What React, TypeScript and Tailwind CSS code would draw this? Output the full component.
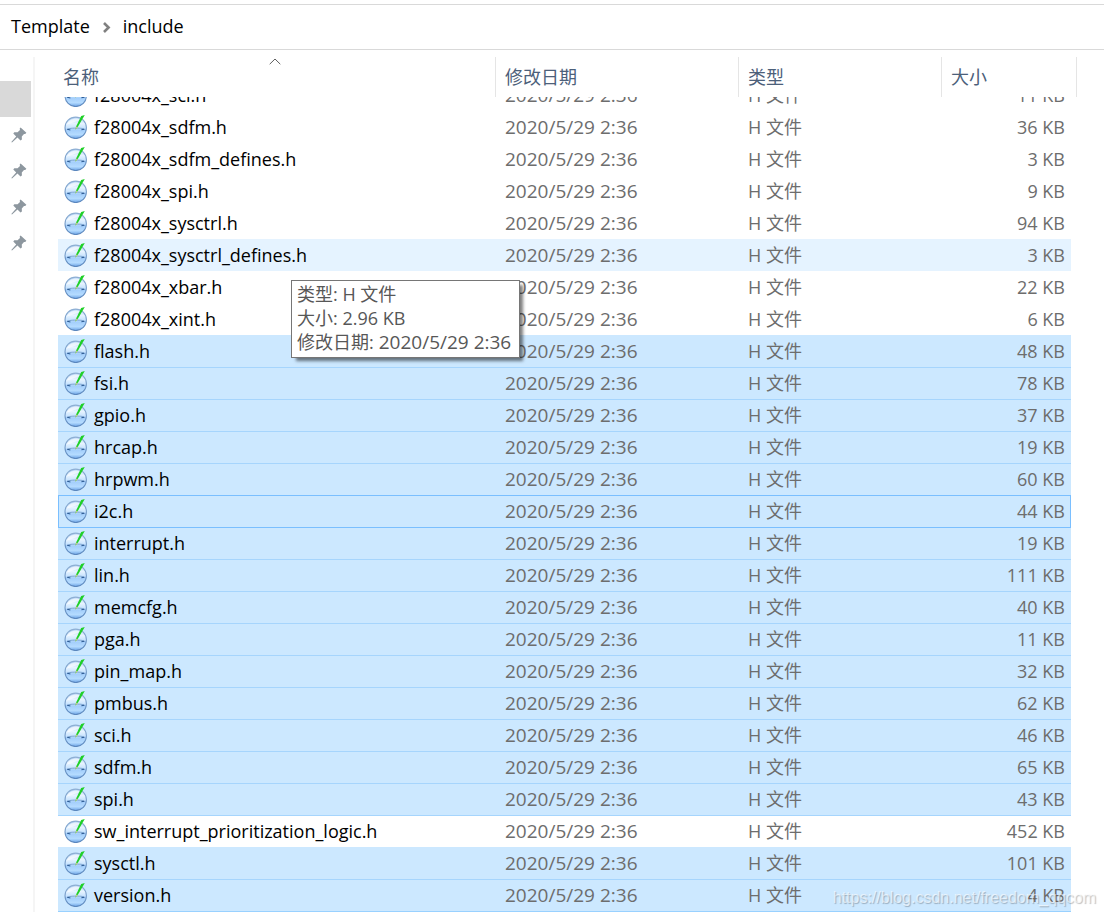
import clsx from "clsx";

type FileRow = {
  name: string;
  size: string;
  state?: "hover" | "selected" | "focused";
};

const MODIFIED = "2020/5/29 2:36";
const TYPE = "H 文件";

const files: FileRow[] = [
  { name: "f28004x_sci.h", size: "11 KB" },
  { name: "f28004x_sdfm.h", size: "36 KB" },
  { name: "f28004x_sdfm_defines.h", size: "3 KB" },
  { name: "f28004x_spi.h", size: "9 KB" },
  { name: "f28004x_sysctrl.h", size: "94 KB" },
  { name: "f28004x_sysctrl_defines.h", size: "3 KB", state: "hover" },
  { name: "f28004x_xbar.h", size: "22 KB" },
  { name: "f28004x_xint.h", size: "6 KB" },
  { name: "flash.h", size: "48 KB", state: "selected" },
  { name: "fsi.h", size: "78 KB", state: "selected" },
  { name: "gpio.h", size: "37 KB", state: "selected" },
  { name: "hrcap.h", size: "19 KB", state: "selected" },
  { name: "hrpwm.h", size: "60 KB", state: "selected" },
  { name: "i2c.h", size: "44 KB", state: "focused" },
  { name: "interrupt.h", size: "19 KB", state: "selected" },
  { name: "lin.h", size: "111 KB", state: "selected" },
  { name: "memcfg.h", size: "40 KB", state: "selected" },
  { name: "pga.h", size: "11 KB", state: "selected" },
  { name: "pin_map.h", size: "32 KB", state: "selected" },
  { name: "pmbus.h", size: "62 KB", state: "selected" },
  { name: "sci.h", size: "46 KB", state: "selected" },
  { name: "sdfm.h", size: "65 KB", state: "selected" },
  { name: "spi.h", size: "43 KB", state: "selected" },
  { name: "sw_interrupt_prioritization_logic.h", size: "452 KB" },
  { name: "sysctl.h", size: "101 KB", state: "selected" },
  { name: "version.h", size: "4 KB", state: "selected" },
];

const isSelected = (file?: FileRow) =>
  file?.state === "selected" || file?.state === "focused";

const IconDefs = () => (
  <svg className="absolute h-0 w-0" aria-hidden="true">
    <defs>
      <linearGradient id="globe" x1="0" y1="0" x2="0" y2="1">
        <stop offset="0" stopColor="#b4d4f6" />
        <stop offset="0.3" stopColor="#e6f3ff" />
        <stop offset="0.52" stopColor="#c6e2fe" />
        <stop offset="0.6" stopColor="#a3cefb" />
        <stop offset="0.82" stopColor="#b4dbff" />
        <stop offset="1" stopColor="#6ba3e6" />
      </linearGradient>
      <linearGradient id="rim" x1="0" y1="0" x2="0" y2="1">
        <stop offset="0" stopColor="#8fb0d4" />
        <stop offset="1" stopColor="#5a86bd" />
      </linearGradient>
    </defs>
  </svg>
);

const FileIcon = () => (
  <svg className="h-6 w-6 shrink-0" viewBox="0 0 24 24" aria-hidden="true">
    <circle cx="11.7" cy="12.8" r="10.7" fill="url(#globe)" stroke="url(#rim)" strokeWidth="1.1" />
    <path d="M4 7.5C6.5 3.6 13 2.2 17 4.6C13.5 6.2 8 8.2 3.2 9.4Z" fill="#fff" opacity="0.6" />
    <path d="M3.3 14.6C2.8 13.8 7 13.1 12 13.1C17 13.1 20.8 13.6 20.2 14.4" fill="none" stroke="#6f9bc9" strokeWidth="0.9" />
    <path d="M3.2 14.2L6.4 15M17.4 14.7L20.4 14.2" stroke="#2c5a92" strokeWidth="1.1" />
    <path d="M17.2 0.9L20.8 0.1L14 11.6L11.4 14.8L12.2 11.3Z" fill="#1fd027" />
    <path d="M12.4 11.4L13.7 12L11.3 15Z" fill="#dcc98a" />
  </svg>
);

const PinIcon = () => (
  <svg className="h-4 w-4" viewBox="0 0 16 16" aria-hidden="true">
    <path
      d="M9.6 0.4L15.4 5.8L14.2 7L13 6.9L10.8 9.4L10.9 12.6L9.5 13.4L6.5 10.6L1 15.6L0.3 15L5.2 9.4L2.3 6.5L3.3 5.2L6.6 5.2L9 2.9L8.7 1.5Z"
      fill="#8d979f"
    />
  </svg>
);

const Breadcrumb = () => (
  <nav aria-label="Path" className="mt-1 flex h-[46px] items-center border-y border-[#d9d9d9] px-[11px] pb-0.5 text-black">
    <a href="#template">Template</a>
    <svg className="mx-3 mt-0.5 h-[11px] w-[9px]" viewBox="0 0 9 11" aria-hidden="true">
      <path d="M2 1L6.6 5.5L2 10" fill="none" stroke="#808080" strokeWidth="2.6" />
    </svg>
    <a href="#include">include</a>
  </nav>
);

const QuickAccess = () => (
  <aside className="w-[35px] shrink-0 border-r-2 border-[#f5f5f5] pt-6">
    <div className="h-9 w-[31px] bg-[#d9d9d9]" />
    {["desktop", "downloads", "documents", "pictures"].map((item) => (
      <div key={item} className="flex h-9 items-center pl-[11px]">
        <PinIcon />
      </div>
    ))}
  </aside>
);

const HEAD_CELL = "relative border-r border-[#e5e5e5] p-0 text-left font-normal text-[#4c607a]";

const TableHead = () => (
  <thead>
    <tr className="h-10">
      <th scope="col" aria-sort="ascending" className={HEAD_CELL}>
        <button type="button" className="pl-[5px]">名称</button>
        <svg className="absolute left-1/2 top-px -ml-2 h-[7px] w-3" viewBox="0 0 12 7" aria-hidden="true">
          <path d="M0.7 6.2L6 1L11.3 6.2" fill="none" stroke="#5f5f5f" />
        </svg>
      </th>
      <th scope="col" className={HEAD_CELL}>
        <button type="button" className="pl-[9px]">修改日期</button>
      </th>
      <th scope="col" className={HEAD_CELL}>
        <button type="button" className="pl-[9px]">类型</button>
      </th>
      <th scope="col" colSpan={2} className={HEAD_CELL}>
        <button type="button" className="pl-[9px]">大小</button>
      </th>
    </tr>
  </thead>
);

const Row = ({ file, prev, first, last }: { file: FileRow; prev?: FileRow; first: boolean; last: boolean }) => {
  const focused = file.state === "focused";
  // neighbouring selected rows share one line, owned by the lower row
  const cell = clsx(
    "p-0",
    !first && "border-t",
    file.state === "hover" && "bg-[#e5f3ff]",
    isSelected(file) && "bg-[#cce8ff]",
    focused || prev?.state === "focused"
      ? "border-t-[#7abfff]"
      : isSelected(prev)
        ? "border-t-[#a6d5fd]"
        : isSelected(file)
          ? "border-t-[#cce8ff]"
          : file.state === "hover"
            ? "border-t-[#e5f3ff]"
            : "border-t-transparent",
    last && "border-b border-b-[#99d1ff]",
  );
  // the top row is scrolled halfway under the header
  const clip = clsx("flex flex-col justify-end overflow-hidden", first ? "h-3.5" : "h-[31px]");
  const content = "flex h-[31px] shrink-0 items-center pb-0.5";

  return (
    <tr className="text-[#6d6d6d]">
      <td className={clsx(cell, focused && "border-l border-l-[#7abfff]")}>
        <div className={clip}>
          <div className={clsx(content, "gap-1.5 text-black", focused ? "pl-[5px]" : "pl-1.5")}>
            <FileIcon />
            <span>{file.name}</span>
          </div>
        </div>
      </td>
      <td className={cell}>
        <div className={clip}>
          <div className={clsx(content, "pl-[9px] text-[19px]")}>{MODIFIED}</div>
        </div>
      </td>
      <td className={cell}>
        <div className={clip}>
          <div className={clsx(content, "pl-[9px]")}>{TYPE}</div>
        </div>
      </td>
      <td className={clsx(cell, focused && "border-r border-r-[#7abfff]")}>
        <div className={clip}>
          <div className={clsx(content, "justify-end", focused ? "pr-[5px]" : "pr-1.5")}>{file.size}</div>
        </div>
      </td>
      <td className="p-0" />
    </tr>
  );
};

const FileTable = () => (
  <table className="w-full table-fixed border-separate border-spacing-0">
    <colgroup>
      <col />
      <col className="w-[243px]" />
      <col className="w-[203px]" />
      <col className="w-[129px]" />
      <col className="w-1.5" />
    </colgroup>
    <TableHead />
    <tbody>
      {files.map((file, i) => (
        <Row key={file.name} file={file} prev={files[i - 1]} first={i === 0} last={i === files.length - 1} />
      ))}
    </tbody>
  </table>
);

const Tooltip = () => (
  <div
    role="tooltip"
    className="absolute left-[233px] top-[223px] whitespace-nowrap border border-[#767676] bg-white pb-[3px] pl-[5px] pr-2 pt-px leading-6 text-[#575757] shadow-[4px_4px_3px_-1px_rgba(0,0,0,0.5)]"
  >
    <p>类型: H 文件</p>
    <p>大小: 2.96 KB</p>
    <p className="flex gap-[5px]">
      <span>修改日期:</span>
      <span className="text-[19px]">{MODIFIED}</span>
    </p>
  </div>
);

export default function App() {
  return (
    <div className="relative bg-white pb-[5px] font-['Open_Sans','Noto_Sans_CJK_SC',sans-serif] text-[18px] leading-6">
      <IconDefs />
      <Breadcrumb />
      <div className="flex pt-[7px]">
        <QuickAccess />
        <main className="relative ml-[23px] mr-[27px] min-w-0 flex-1">
          <FileTable />
          <Tooltip />
        </main>
      </div>
      <span className="absolute bottom-[9px] right-2 font-['Liberation_Sans',sans-serif] text-[16px] leading-5 text-white/60 [text-shadow:1px_1px_1px_rgba(0,0,0,0.25)]">
        https://blog.csdn.net/freedom_qqcom
      </span>
    </div>
  );
}
